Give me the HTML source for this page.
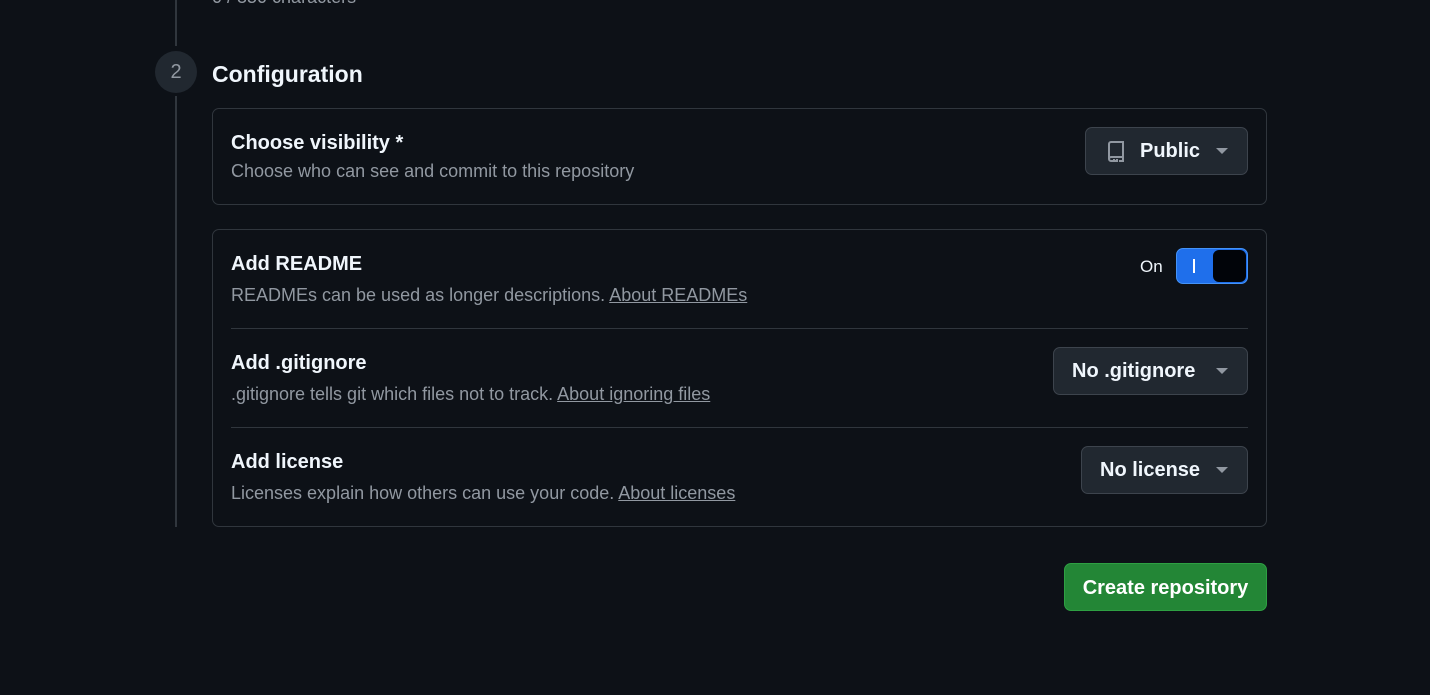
<!DOCTYPE html>
<html><head><style>
*{box-sizing:border-box;margin:0;padding:0}
body{width:1430px;height:695px;background:#0d1117;font-family:"Liberation Sans",sans-serif;color:#f0f6fc;position:relative;overflow:hidden}
.abs{position:absolute}
.line{left:175px;width:2px;background:#30363d}
.card{left:212px;width:1055px;border:1px solid #30363d;border-radius:7px}
.t{font-size:20px;font-weight:bold;color:#f0f6fc}
.d{font-size:18px;color:#9198a1}
.d u{color:#9198a1}
.btn{background:#212830;border:1px solid #3d444d;border-radius:7px;height:48px;display:flex;align-items:center;font-size:20px;font-weight:bold;color:#f0f6fc}
.caret{width:0;height:0;border-left:6px solid transparent;border-right:6px solid transparent;border-top:6px solid #9198a1;margin-left:auto;margin-right:19px}
.div{left:231px;width:1017px;height:1px;background:#30363d}
</style></head><body>
<div class="abs d" style="left:212px;top:-13px;font-size:18px">0 / 350 characters</div>
<div class="abs line" style="top:0;height:46px"></div>
<div class="abs line" style="top:96px;height:431px"></div>
<div class="abs" style="left:155px;top:51px;width:42px;height:42px;border-radius:50%;background:#212830;color:#9198a1;font-size:20px;text-align:center;line-height:42px">2</div>
<div class="abs" style="left:212px;top:61px;font-size:23px;font-weight:bold">Configuration</div>

<div class="abs card" style="top:108px;height:97px"></div>
<div class="abs t" style="left:231px;top:132px">Choose visibility *</div>
<div class="abs d" style="left:231px;top:161px">Choose who can see and commit to this repository</div>
<div class="abs btn" style="left:1085px;top:127px;width:163px">
<svg width="20" height="22" viewBox="0 0 20 22" style="margin-left:20px;margin-right:14px"><path d="M3 19V4a2 2 0 0 1 2-2h12v15H5a2 2 0 0 0-2 2 2 2 0 0 0 2 2h2M11 19v3l-1.5-1-1.5 1v-3M17 17v4h-4" fill="none" stroke="#9198a1" stroke-width="2"/></svg>Public<span class="caret"></span></div>

<div class="abs card" style="top:229px;height:298px"></div>
<div class="abs t" style="left:231px;top:253px">Add README</div>
<div class="abs d" style="left:231px;top:285px">READMEs can be used as longer descriptions. <u>About READMEs</u></div>
<div class="abs" style="left:1140px;top:257px;font-size:17px">On</div>
<div class="abs" style="left:1176px;top:248px;width:72px;height:36px;border-radius:7px;background:#1f6feb;border:1px solid #4493f8">
<div class="abs" style="left:16px;top:10px;width:2px;height:14px;background:#fff"></div>
<div class="abs" style="left:36px;top:1px;width:33px;height:32px;border-radius:6px;background:#010409"></div></div>
<div class="abs div" style="top:328px"></div>
<div class="abs t" style="left:231px;top:352px">Add .gitignore</div>
<div class="abs d" style="left:231px;top:384px">.gitignore tells git which files not to track. <u>About ignoring files</u></div>
<div class="abs btn" style="left:1053px;top:347px;width:195px;padding-left:18px">No .gitignore<span class="caret"></span></div>
<div class="abs div" style="top:427px"></div>
<div class="abs t" style="left:231px;top:451px">Add license</div>
<div class="abs d" style="left:231px;top:483px">Licenses explain how others can use your code. <u>About licenses</u></div>
<div class="abs btn" style="left:1081px;top:446px;width:167px;padding-left:18px">No license<span class="caret"></span></div>

<div class="abs" style="left:1064px;top:563px;width:203px;height:48px;background:#238636;border:1px solid #2ea043;border-radius:7px;font-size:20px;font-weight:bold;color:#fff;text-align:center;line-height:48px">Create repository</div>
</body></html>
